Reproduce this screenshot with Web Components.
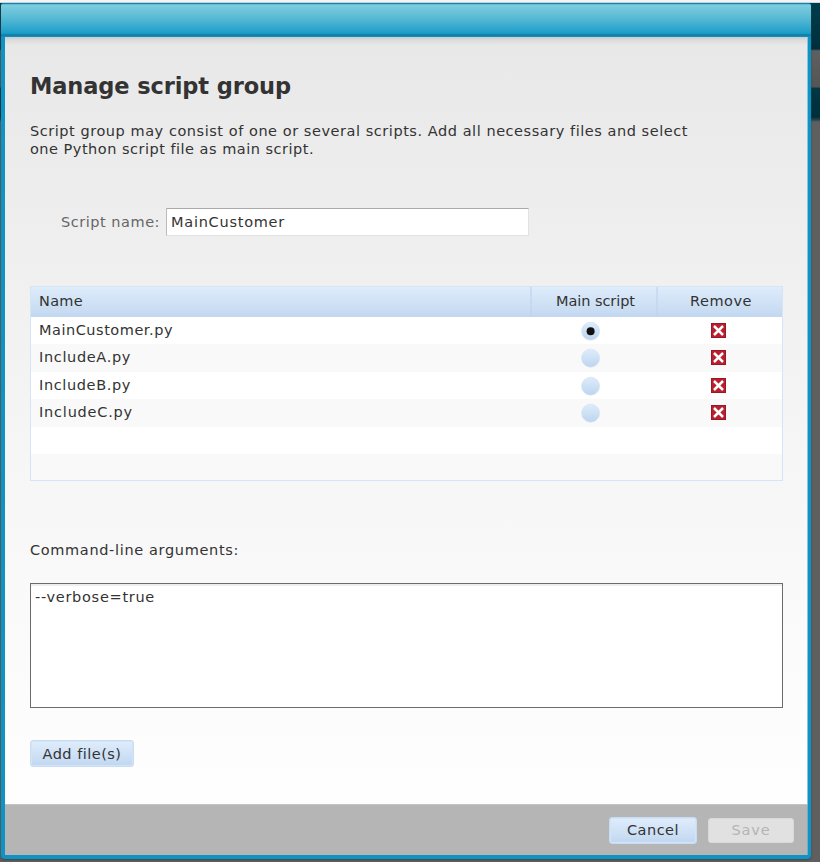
<!DOCTYPE html>
<html lang="en">
<head>
<meta charset="utf-8">
<title>Manage script group</title>
<style>
html,body{margin:0;height:862px;overflow:hidden}
body{font:14.5px/18px "DejaVu Sans",Verdana,sans-serif;color:#333;
background:linear-gradient(#f8f4f3 0 2px,#c9dce2 2px 3px,#003c4d 3px,#002f3b 49px,#315159 50px,#5f5f5f 51px,#555 87px,#073845 88px,#003541 92px,#002f39 117px,#274850 120px,#5f5f5f 122px 862px)}
</style>
</head>
<body>
<script-dialog>
  <dialog-header slot="header"></dialog-header>
  <fit-text class="title" slot="title" w="260" style="font-size:22.5px;font-weight:bold;line-height:28px">Manage script group</fit-text>
  <fit-text slot="intro" w="657">Script group may consist of one or several scripts. Add all necessary files and select</fit-text>
  <fit-text slot="intro" w="283">one Python script file as main script.</fit-text>
  <name-field slot="name">
    <fit-text slot="label" w="98">Script name:</fit-text>
    <fit-text w="113">MainCustomer</fit-text>
  </name-field>
  <script-table slot="table">
    <script-row w="133" name="MainCustomer.py" main></script-row>
    <script-row w="91" name="IncludeA.py"></script-row>
    <script-row w="91" name="IncludeB.py"></script-row>
    <script-row w="93" name="IncludeC.py"></script-row>
    <script-row></script-row>
    <script-row></script-row>
  </script-table>
  <fit-text slot="args-label" w="208">Command-line arguments:</fit-text>
  <args-box slot="args"><fit-text w="119">--verbose=true</fit-text></args-box>
  <push-button slot="add" style="width:104px;height:27px"><fit-text w="78">Add file(s)</fit-text></push-button>
  <push-button slot="footer" style="width:88px;height:27px"><fit-text w="51">Cancel</fit-text></push-button>
  <push-button slot="footer" disabled style="width:86px;height:25px"><fit-text w="38">Save</fit-text></push-button>
</script-dialog>
<script>
const define = (name, html, setup) => customElements.define(name, class extends HTMLElement {
  connectedCallback() {
    if (this.shadowRoot) return;
    this.attachShadow({ mode: 'open' }).innerHTML = html;
    if (setup) setup(this, this.shadowRoot);
  }
});

// Distributes letter spacing so that the text spans w pixels.
define('fit-text', `<style>:host{display:block;width:max-content;white-space:pre}span{display:inline-block;font-variant-ligatures:none}</style><span><slot></slot></span>`, (host, root) => {
  const span = root.querySelector('span');
  const natural = span.getBoundingClientRect().width;
  if (natural) span.style.letterSpacing = ((+host.getAttribute('w') + 1 - natural) / host.textContent.length) + 'px';
});

define('dialog-header', `<style>
:host{display:block;box-sizing:border-box;height:34px;flex:none;border-radius:3px 3px 0 0;
background:linear-gradient(#1286ad 0 1px,#5ebdd6 1px 2px,#7fccdf 2px,#5bbcd5 14px,#2ea5cc 26px,#149bca 31px,#1681a8 31px 33px,#098fc2 33px)}
</style>`);

define('script-dialog', `<style>
:host{display:flex;flex-direction:column;box-sizing:border-box;width:810px;height:856px;margin:3px 0 0 1px;border-radius:4px;background:#0c94c7;box-shadow:0 1px 2px #444}
main{box-sizing:border-box;height:767px;margin:0 3px 0 4px;padding:35px 25px 0;border-right:1px solid #8cc4da;
background:linear-gradient(#ccc 0,#dbdbdb 3px,#e7e7e700 8px),linear-gradient(#e8e8e8,#ededed 150px,#f6f6f6 420px,#fcfcfc 660px,#fefefe)}
.intro{margin-top:22px}
.name{margin:50px 0 50px 31px}
.label{margin-top:60px}
.args{margin-top:24px}
.add{margin-top:32px;display:flex}
footer{box-sizing:border-box;height:51px;margin:0 3px 0 4px;padding-right:13px;border-top:1px solid #c3c3c3;border-right:1px solid #78acc0;background:#b5b5b5;display:flex;align-items:center;justify-content:flex-end;gap:11px}
</style>
<slot name="header"></slot>
<main>
<slot name="title"></slot>
<div class="intro"><slot name="intro"></slot></div>
<div class="name"><slot name="name"></slot></div>
<slot name="table"></slot>
<div class="label"><slot name="args-label"></slot></div>
<div class="args"><slot name="args"></slot></div>
<div class="add"><slot name="add"></slot></div>
</main>
<footer><slot name="footer"></slot></footer>`);

define('name-field', `<style>
:host{display:flex;align-items:center;height:28px}
.l{color:#666;width:105px}
.i{box-sizing:border-box;width:363px;height:28px;background:#fff;border:1px solid #e2e2e2;border-top-color:#aaa;border-left-color:#bbb;padding:4px}
</style><div class="l"><slot name="label"></slot></div><div class="i"><slot></slot></div>`);

define('script-table', `<style>
:host{display:block;box-sizing:border-box;width:753px;height:195px;border:1px solid #d5e4f6}
.h{display:grid;grid-template-columns:499px 126px 1fr;height:30px;background:linear-gradient(#deecfb,#c2d8f0)}
.h div{box-sizing:border-box;padding-top:5px}
.h div:first-child{padding-left:8px}
.h div+div{border-left:2px solid #bfd4ec99;padding-left:24px}
.h div:last-child{padding-left:32px}
.rows{display:grid;height:163px;grid-template-rows:27px 28px 27px 28px 27px 26px}
::slotted(:nth-child(even)){background:#f9f9f9}
</style>
<div class="h"><div><fit-text w="43">Name</fit-text></div><div><fit-text w="78">Main script</fit-text></div><div><fit-text w="61">Remove</fit-text></div></div>
<div class="rows"><slot></slot></div>`);

define('script-row', '', (host, root) => {
  const name = host.getAttribute('name');
  root.innerHTML = `<style>
:host{display:grid;grid-template-columns:550px 128px 1fr;background:#fff}
.n{padding:4px 0 0 8px}
svg{display:block}
.r{margin-top:4px}
.x{margin:6px 0 0 2px}
</style>` + (name ? `
<div class="n"><fit-text w="${host.getAttribute('w')}">${name}</fit-text></div>
<svg class="r" width="20" height="20" viewBox="0 0 20 20">
<defs><linearGradient id="g" x2="0" y2="1"><stop stop-color="#deecfb"/><stop offset="1" stop-color="#bdd5ef"/></linearGradient></defs>
<circle cx="9.6" cy="10.2" r="9" fill="url(#g)" stroke="#d3e3f5" stroke-width=".7"/>${host.hasAttribute('main') ? '<circle cx="9.6" cy="10.2" r="4" fill="#111"/>' : ''}</svg>
<svg class="x" width="15" height="15" viewBox="0 0 15 15">
<rect x=".5" y=".5" width="14" height="14" fill="#b91f2e" stroke="#981827"/>
<path d="M3 3 12 12M12 3 3 12" stroke="#fff" stroke-width="2.5"/></svg>` : '');
});

define('args-box', `<style>
:host{display:block;box-sizing:border-box;width:753px;height:125px;background:#fff;border:1px solid #6b6b6b;padding:4px;box-shadow:inset 0 2px 1px #eee}
</style><slot></slot>`);

define('push-button', `<style>
:host{display:flex;box-sizing:border-box;align-items:center;justify-content:center;border:1px solid #c8dcf3;border-radius:3px;background:linear-gradient(#dfedfc,#c1d7f0);box-shadow:inset 0 0 0 1px #d3e4f8}
:host([disabled]){background:#e1e1e1;border-color:#d9d9d9;box-shadow:none;color:#b4b4b4}
</style><slot></slot>`);
</script>
</body>
</html>
